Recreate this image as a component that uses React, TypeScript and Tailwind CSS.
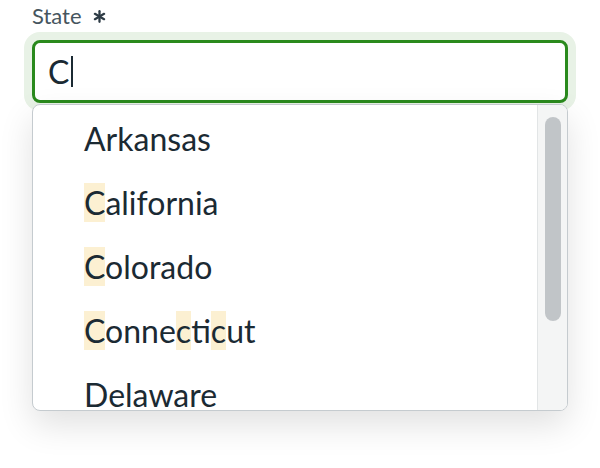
import React from 'react';

const states = [
  { name: 'Arkansas', hits: [] as number[] },
  { name: 'California', hits: [0] },
  { name: 'Colorado', hits: [0] },
  { name: 'Connecticut', hits: [0, 5, 8] },
  { name: 'Delaware', hits: [] as number[] },
];

function Highlighted({ name, hits }: { name: string; hits: number[] }) {
  return (
    <>
      {name.split('').map((ch, i) =>
        hits.includes(i) ? (
          <span key={i} className="bg-[#fcf0d2]">
            {ch}
          </span>
        ) : (
          <span key={i}>{ch}</span>
        )
      )}
    </>
  );
}

export default function App() {
  return (
    <div className="w-[600px] h-[468px] bg-white font-['Lato','Noto_Sans',sans-serif] overflow-hidden">
      <div className="pl-8 pt-[3px] text-[22px] leading-[26px] text-[#46555e] flex items-center">
        <span>State</span>
        {/* required mark */}
        <svg className="ml-[11px] mt-[1px]" width="13" height="13" viewBox="0 0 13 13" aria-label="required">
          <g stroke="#2d3b45" strokeWidth="2.3" strokeLinecap="round">
            <line x1="6.5" y1="1.2" x2="6.5" y2="11.8" />
            <line x1="1.9" y1="3.85" x2="11.1" y2="9.15" />
            <line x1="1.9" y1="9.15" x2="11.1" y2="3.85" />
          </g>
        </svg>
      </div>
      <div className="relative mx-8 mt-[11px]">
        <div className="h-[63px] rounded-lg border-[3px] border-[#2a8a1d] ring-8 ring-[#e8f2e6] bg-white flex items-center pl-[13px] text-[32px] text-[#1b2a33]">
          <span>C</span>
          <span className="ml-[2px] w-[2px] h-[31px] bg-[#1b2a33]" />
        </div>
        <div className="absolute left-0 right-0 top-[64px] h-[307px] rounded-lg border border-[#c5cbcf] bg-white shadow-[0_14px_34px_rgba(0,0,0,0.12)] flex overflow-hidden">
          <ul className="flex-1 pt-[2px]">
            {states.map((s) => (
              <li key={s.name} className="h-16 leading-[64px] pl-[51px] text-[32px] text-[#1b2a33]">
                <Highlighted name={s.name} hits={s.hits} />
              </li>
            ))}
          </ul>
          <div className="w-[30px] border-l border-[#e2e5e6] bg-[#f4f5f5] pt-[12px] pl-[7px]">
            <div className="w-[16px] h-[204px] rounded-full bg-[#c1c5c8]" />
          </div>
        </div>
      </div>
    </div>
  );
}
